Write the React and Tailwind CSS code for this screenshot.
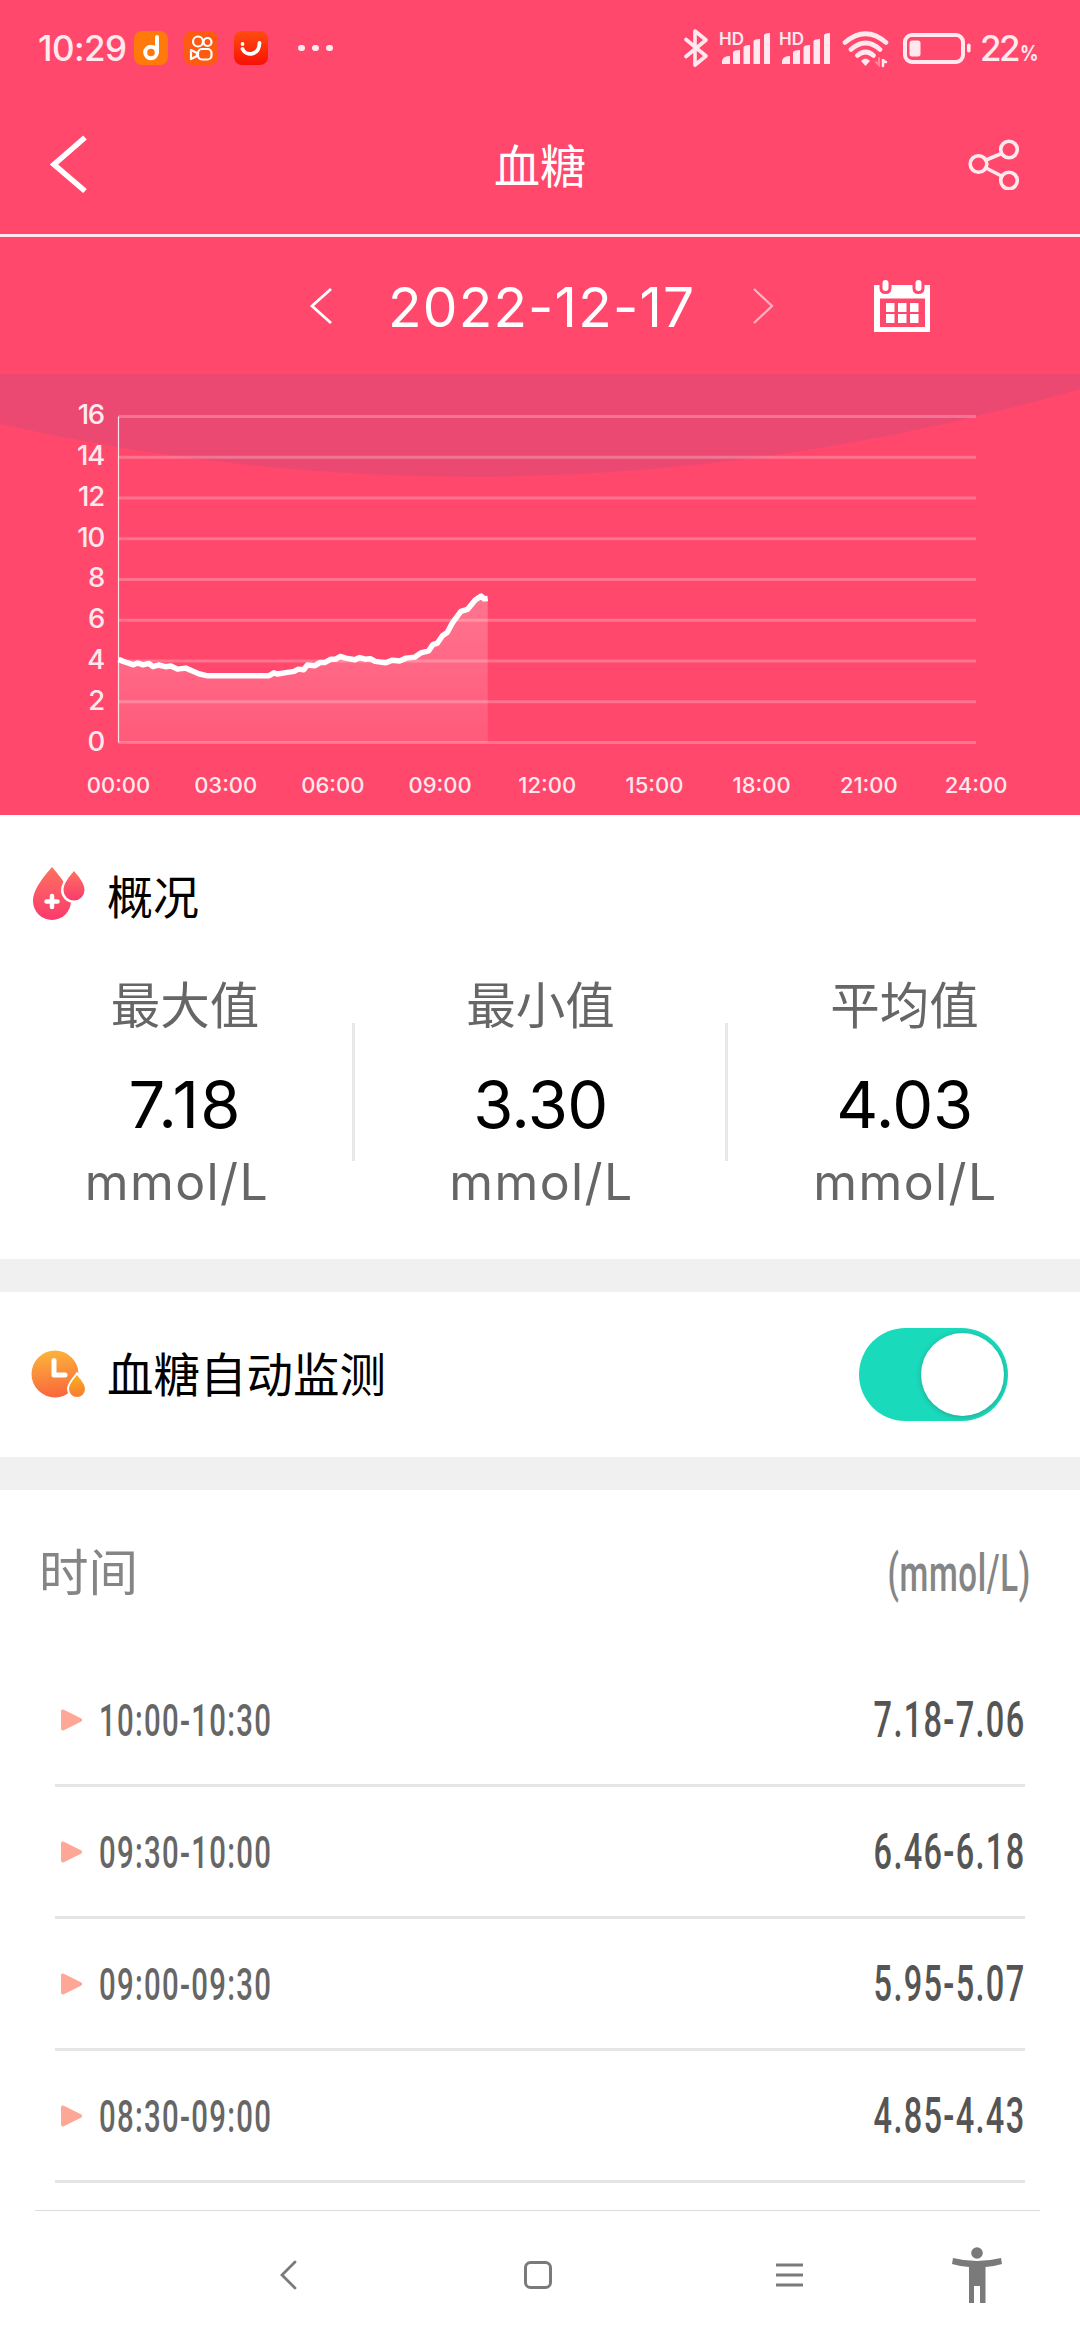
import { useState } from "react";

const READINGS = [
  [0, 4.08], [8, 3.98], [18, 3.88], [25, 3.81], [32, 3.9], [41, 3.81], [51, 3.88], [58, 3.73], [67, 3.8],
  [79, 3.72], [88, 3.75], [99, 3.6], [113, 3.65], [125, 3.5], [136, 3.36], [148, 3.28], [253, 3.28], [261, 3.42],
  [267, 3.36], [284, 3.44], [295, 3.49], [302, 3.6], [311, 3.57], [317, 3.8], [330, 3.77], [339, 3.93], [347, 3.93],
  [356, 4.08], [364, 4.08], [372, 4.22], [382, 4.14], [397, 4.06], [405, 4.17], [414, 4.09], [423, 4.11], [431, 3.98],
  [449, 3.91], [460, 4.04], [472, 4.0], [483, 4.14], [498, 4.19], [508, 4.4], [521, 4.5], [528, 4.81], [535, 4.86],
  [544, 5.24], [552, 5.4], [561, 5.88], [575, 6.43], [586, 6.53], [599, 6.99], [609, 7.18], [614, 7.05], [620, 7.07],
];

const HOURS = ["00:00", "03:00", "06:00", "09:00", "12:00", "15:00", "18:00", "21:00", "24:00"];
const LEVELS = [0, 2, 4, 6, 8, 10, 12, 14, 16];

const STATS = [
  { label: "最大值", value: "7.18", width: "w-[352px]", shift: "pl-[18px]", tracking: "tracking-[1.2px]", unitShift: "pl-[2px]" },
  { label: "最小值", value: "3.30", width: "w-[370px]", shift: "pl-px", tracking: "tracking-[-0.6px]", unitShift: "pl-[3px]" },
  { label: "平均值", value: "4.03", width: "w-[352px]", shift: "pl-px", tracking: "tracking-[-0.4px]", unitShift: "pl-[3px]" },
];

const RECORDS = [
  { time: "10:00-10:30", range: "7.18-7.06" },
  { time: "09:30-10:00", range: "6.46-6.18" },
  { time: "09:00-09:30", range: "5.95-5.07" },
  { time: "08:30-09:00", range: "4.85-4.43" },
];

function Signal() {
  return (
    <div className="relative w-[50px] h-[40px]">
      <span className="absolute left-[-1px] top-[3px] text-[17px] leading-none font-semibold">HD</span>
      <svg className="block" width="50" height="40" viewBox="0 0 50 40" fill="currentColor">
        <path d="M2 36v-3q1-5 8-5v8zM13 36V24q1-2 7-2v14zM23.500 36V19q1-2 6.500-2v19zM33.500 36V13q1-2 6.500-2v25zM44 36V7q1-2 6-2v31z" />
      </svg>
    </div>
  );
}

function StatusBar() {
  return (
    <div className="flex items-center h-[96px] pl-[38px] pr-[42px] text-[#ffe9ee]">
      <span className="w-[96px] text-[35px] leading-none font-medium tracking-[-0.6px] whitespace-nowrap">10:29</span>
      <div className="flex gap-[16px]">
        <svg width="34" height="34" viewBox="0 0 34 34" fill="none">
          <rect width="34" height="34" rx="8" fill="#ff7a0a" />
          <circle cx="17" cy="21.500" r="5.800" stroke="#fff" strokeWidth="4" />
          <path d="M23 21V6" stroke="#fff" strokeWidth="4" strokeLinecap="round" />
        </svg>
        <svg width="34" height="34" viewBox="0 0 34 34" fill="none" stroke="#fff" strokeWidth="2.200">
          <rect width="34" height="34" rx="8" fill="#ff5a12" stroke="none" />
          <circle cx="14" cy="10.500" r="5" />
          <circle cx="23.500" cy="11" r="4" />
          <rect x="14" y="18" width="13.500" height="10.500" rx="4" />
          <path d="M7 19l6 3v3l-6 3z" strokeLinejoin="round" />
        </svg>
        <svg width="34" height="34" viewBox="0 0 34 34" fill="none">
          <defs>
            <linearGradient id="mall" x1="0" y1="0" x2="0" y2="1">
              <stop stopColor="#ff4d10" />
              <stop offset="1" stopColor="#f81105" />
            </linearGradient>
          </defs>
          <rect width="34" height="34" rx="8" fill="url(#mall)" />
          <circle cx="8.500" cy="13" r="1.900" fill="#fff" />
          <path d="M8.500 18C12 25.500 25 25 25.500 12" stroke="#fff" strokeWidth="3.800" strokeLinecap="round" />
        </svg>
      </div>
      <div className="flex gap-[7.5px] ml-[30px]">
        <span className="size-[6.5px] rounded-full bg-current" />
        <span className="size-[6.5px] rounded-full bg-current" />
        <span className="size-[6.5px] rounded-full bg-current" />
      </div>
      <div className="flex items-center ml-auto">
        <svg width="27" height="40" viewBox="0 0 27 40" fill="none" stroke="currentColor" strokeWidth="3.600" strokeLinejoin="round" strokeLinecap="round">
          <path d="M3 11.500l20 16.500-11 9V3l11 9L3 28.500" />
        </svg>
        <div className="flex gap-[10px] ml-[10px]">
          <Signal />
          <Signal />
        </div>
        <svg className="ml-[12px]" width="48" height="40" viewBox="0 0 48 40" fill="none" stroke="currentColor" strokeWidth="4.600" strokeLinecap="round">
          <path d="M3 14.500Q23.500-3 44 14.500M9 21.500Q23.500 8.500 38 21.500M15.500 27.500Q23.500 20.500 31.500 27.500" />
          <path d="M19 33q4.500-5 9 0l-4.500 5z" fill="currentColor" stroke="none" />
          <path d="M41 38v-7q0 3 3 3" strokeWidth="2.500" />
          <path d="M37 30v7l-3-3" strokeWidth="2" opacity="0.4" />
        </svg>
        <svg className="ml-[12px]" width="70" height="40" viewBox="0 0 70 40" fill="none">
          <rect x="3" y="7" width="58" height="27" rx="7" stroke="currentColor" strokeWidth="4" />
          <rect x="7.500" y="12.500" width="11" height="16" rx="2.500" fill="currentColor" />
          <rect x="65" y="15.500" width="3.600" height="9" rx="1.800" fill="currentColor" />
        </svg>
        <div className="flex items-baseline w-[66px] pl-[8px] leading-none whitespace-nowrap">
          <span className="text-[35px] font-medium tracking-[-2.5px]">22</span>
          <span className="text-[21px] font-bold ml-[2px] origin-left scale-x-[0.87]">%</span>
        </div>
      </div>
    </div>
  );
}

function TitleBar() {
  return (
    <div className="flex items-center justify-between h-[141px] pl-[48px] pr-[58px] pb-[4px] border-b-[3px] border-[#ffe4ea]">
      <svg width="42" height="60" viewBox="0 0 42 60" fill="none" stroke="#fff" strokeWidth="5.500">
        <path d="M37 4.500L6 31.500l31 26.500" />
      </svg>
      <h1 className="text-[46px] leading-none pl-[22px] pt-[5px]">血糖</h1>
      <svg width="54" height="54" viewBox="0 0 54 54" fill="none" stroke="#ffe9ee" strokeWidth="3.600">
        <circle cx="10.500" cy="28" r="8.300" />
        <circle cx="41" cy="13.500" r="8.300" />
        <circle cx="41" cy="44.500" r="8.300" />
        <path d="M18 24l15.500-6.500M18 32l15.500 8" />
      </svg>
    </div>
  );
}

function DateBar() {
  return (
    <div className="flex items-center h-[137px] pl-[308px]">
      <svg width="25" height="40" viewBox="0 0 25 40" fill="none" stroke="#fff" strokeWidth="2.800">
        <path d="M23 3L4 20l19 17" />
      </svg>
      <span className="w-[306px] ml-[55px] pt-[3px] text-[55px] leading-none tracking-[1.2px] whitespace-nowrap">2022-12-17</span>
      <svg className="ml-[57px]" width="25" height="40" viewBox="0 0 25 40" fill="none" stroke="#ffb3c2" strokeWidth="2.200">
        <path d="M3 3l18 17L3 37" />
      </svg>
      <svg className="ml-[97px]" width="58" height="54" viewBox="0 0 58 54">
        <path fill="#fff" d="M1 6h56v47H1z" />
        <path fill="#ff486b" d="M7 19.500h45V48H7zM6.500 0h12v9q0 6-6 6t-6-6zM39.500 0h12v9q0 6-6 6t-6-6z" />
        <path fill="#fff" d="M13 24h8.500v9H13zM25 24h8.500v9H25zM37 24h8.500v9H37zM13 35h8.500v9H13zM25 35h8.500v9H25zM37 35h8.500v9H37z" />
        <rect x="9.500" y="1" width="6" height="11" rx="3" fill="#fff" />
        <rect x="42.500" y="1" width="6" height="11" rx="3" fill="#fff" />
      </svg>
    </div>
  );
}

function Chart() {
  const left = 118.5;
  const right = 976;
  const x = (minutes) => left + (minutes / 1440) * (right - left);
  const y = (value) => 368.5 - value * 20.38;
  const line = READINGS.map(([m, v]) => `${x(m)},${y(v)}`).join(" ");

  return (
    <svg className="block" width="1080" height="441" viewBox="0 0 1080 441">
      <defs>
        <linearGradient id="area" x1="0" y1="0" x2="0" y2="1">
          <stop stopColor="#fff" stopOpacity="0.24" />
          <stop offset="1" stopColor="#fff" stopOpacity="0.1" />
        </linearGradient>
      </defs>
      <path d="M0 0H1080V15Q540 171 0 50z" fill="#eb4972" />
      <polygon points={`${x(0)},${y(0)} ${line} ${x(620)},${y(0)}`} fill="url(#area)" />
      {LEVELS.map((level) => (
        <g key={level}>
          <path d={`M${left} ${y(level)}H${right}`} stroke="#fff" strokeOpacity="0.24" strokeWidth="3" />
          <text x="104" y={y(level) + 8} textAnchor="end" fontSize="27.500" fontWeight="500" fill="#ffe9ee" letterSpacing="-1.2">{level}</text>
        </g>
      ))}
      <path d={`M${left} ${y(16)}V${y(0)}`} stroke="#fff" strokeOpacity="0.85" strokeWidth="1.200" />
      <polyline points={line} fill="none" stroke="#fff" strokeWidth="5.500" strokeLinejoin="round" />
      {HOURS.map((hour, i) => (
        <text key={hour} x={x(i * 180)} y="419" textAnchor="middle" fontSize="22" fontWeight="500" fill="#ffe9ee">{hour}</text>
      ))}
    </svg>
  );
}

function DropIcon() {
  return (
    <svg width="56" height="58" viewBox="0 0 56 58">
      <defs>
        <linearGradient id="drop" x1="0" y1="0" x2="0" y2="1">
          <stop stopColor="#fd7160" />
          <stop offset="1" stopColor="#fb3a6d" />
        </linearGradient>
      </defs>
      <path d="M21 2C26 8 40 23 40 36a19 19 0 0 1-38 0C2 23 16 8 21 2z" fill="url(#drop)" />
      <path d="M43 6c4 5 10.500 12 10.500 19a10.500 10.500 0 0 1-21 0c0-7 6.500-14 10.500-19z" fill="url(#drop)" stroke="#fff" strokeWidth="5" paintOrder="stroke" />
      <path d="M21 31v11M15.500 36.500h11" stroke="#fff" strokeWidth="4.500" strokeLinecap="round" />
    </svg>
  );
}

function ClockIcon() {
  return (
    <svg width="56" height="50" viewBox="0 0 56 50" fill="none">
      <defs>
        <linearGradient id="clock" x1="0.500" y1="0" x2="0.600" y2="1">
          <stop stopColor="#fcb33a" />
          <stop offset="1" stopColor="#f9653c" />
        </linearGradient>
        <linearGradient id="clock-drop" x1="0.500" y1="0" x2="0.600" y2="1">
          <stop stopColor="#f9b01c" />
          <stop offset="1" stopColor="#f97a33" />
        </linearGradient>
      </defs>
      <circle cx="24" cy="24" r="23.500" fill="url(#clock)" />
      <path d="M23 10.500V25h11" stroke="#fff" strokeWidth="5" strokeLinecap="round" strokeLinejoin="round" />
      <path d="M46 25c3 4 8 9 8 14a8 8 0 0 1-16 0c0-5 5-10 8-14z" fill="url(#clock-drop)" stroke="#fff" strokeWidth="4" paintOrder="stroke" />
    </svg>
  );
}

function Overview() {
  return (
    <section className="h-[444px]">
      <div className="flex items-center h-[158px] pl-[31px] gap-[20px]">
        <DropIcon />
        <h2 className="text-[46px] leading-none pt-[6px]">概况</h2>
      </div>
      <div className="flex">
        {STATS.map((stat, i) => (
          <div key={stat.label} className="flex items-start">
            {i > 0 && <div className="w-[3px] h-[138px] mt-[50px] bg-[#e8e8e8]" />}
            <div className={`flex flex-col items-center ${stat.width}`}>
              <span className={`pt-[3px] text-[49.5px] leading-[60px] text-[#666] ${stat.shift}`}>{stat.label}</span>
              <span className={`mt-[29px] text-[65px] leading-[80px] text-black ${stat.shift} ${stat.tracking}`}>{stat.value}</span>
              <span className={`mt-[7px] text-[50px] leading-[60px] tracking-[1.4px] text-[#666] ${stat.unitShift}`}>mmol/L</span>
            </div>
          </div>
        ))}
      </div>
    </section>
  );
}

function AutoMonitor() {
  const [enabled, setEnabled] = useState(true);

  return (
    <section className="flex items-center h-[231px] pl-[31px] pr-[72px] border-y-[33px] border-[#f0f0f0]">
      <ClockIcon />
      <h2 className="ml-[20px] pt-px text-[46.5px] leading-none">血糖自动监测</h2>
      <button
        onClick={() => setEnabled(!enabled)}
        className={`flex items-center w-[149px] h-[93px] ml-auto px-[4px] rounded-full ${enabled ? "justify-end bg-[#19dabb]" : "justify-start bg-gray-300"}`}
      >
        <span className="size-[83px] rounded-full bg-white shadow-[0_1px_5px_rgba(60,60,60,0.35)]" />
      </button>
    </section>
  );
}

function Records() {
  return (
    <section className="h-[720px]">
      <div className="flex items-center justify-between h-[165px] pl-[39px] pr-[49px] pt-[3px] text-[#858585]">
        <span className="text-[49.5px] leading-none">时间</span>
        <span className="text-[52px] leading-none font-[Roboto] font-medium tracking-[1px] origin-right scale-x-[0.635]">(mmol/L)</span>
      </div>
      <ul className="pl-[55px] pr-[55px]">
        {RECORDS.map((record) => (
          <li key={record.time} className="flex items-center h-[132px] pl-[6px] border-b-[3px] border-[#e5e5e5] font-[Roboto] font-medium leading-none">
            <svg width="21" height="24" viewBox="0 0 21 24" fill="#ffa797" stroke="#ffa797" strokeWidth="4" strokeLinejoin="round">
              <path d="M2 3.500v17L19 12z" />
            </svg>
            <span className="ml-[17px] pt-[2px] text-[45px] tracking-[2px] text-[#666] origin-left scale-x-[0.652]">{record.time}</span>
            <span className="ml-auto pt-[2px] text-[50.5px] tracking-[2px] text-[#555] origin-right scale-x-[0.645]">{record.range}</span>
          </li>
        ))}
      </ul>
    </section>
  );
}

function NavBar() {
  return (
    <nav className="ml-[35px] mr-[40px] h-[130px] border-t border-[#dcdcdc] text-[#7a7a7a]">
      <div className="flex items-center h-[128px] pl-[244px]">
        <svg width="20" height="32" viewBox="0 0 20 32" fill="none" stroke="currentColor" strokeWidth="2.800" strokeLinecap="round">
          <path d="M16 3L3 16l13 13" />
        </svg>
        <svg className="ml-[223px]" width="32" height="32" viewBox="0 0 32 32" fill="none" stroke="currentColor" strokeWidth="3">
          <rect x="3.500" y="3.500" width="25" height="25" rx="5" />
        </svg>
        <svg className="ml-[221px]" width="30" height="32" viewBox="0 0 30 32" stroke="currentColor" strokeWidth="2.800">
          <path d="M1 6h27M1 16h27M1 26h27" />
        </svg>
        <svg className="ml-[146px]" width="52" height="60" viewBox="0 0 52 60" fill="currentColor">
          <circle cx="26" cy="8" r="5.800" />
          <path d="M2 13q24 6 48 0l1 6q-8 2.500-16.500 3V58H29V41h-6v17h-5V22Q9 21.500 1 19z" />
        </svg>
      </div>
    </nav>
  );
}

export default function App() {
  return (
    <div className="w-[1080px] h-[2340px] overflow-hidden bg-white font-[Inter,'Noto_Sans_CJK_SC',sans-serif] text-black">
      <header className="bg-[#ff486b] text-white">
        <StatusBar />
        <TitleBar />
        <DateBar />
        <Chart />
      </header>
      <Overview />
      <AutoMonitor />
      <Records />
      <NavBar />
    </div>
  );
}
